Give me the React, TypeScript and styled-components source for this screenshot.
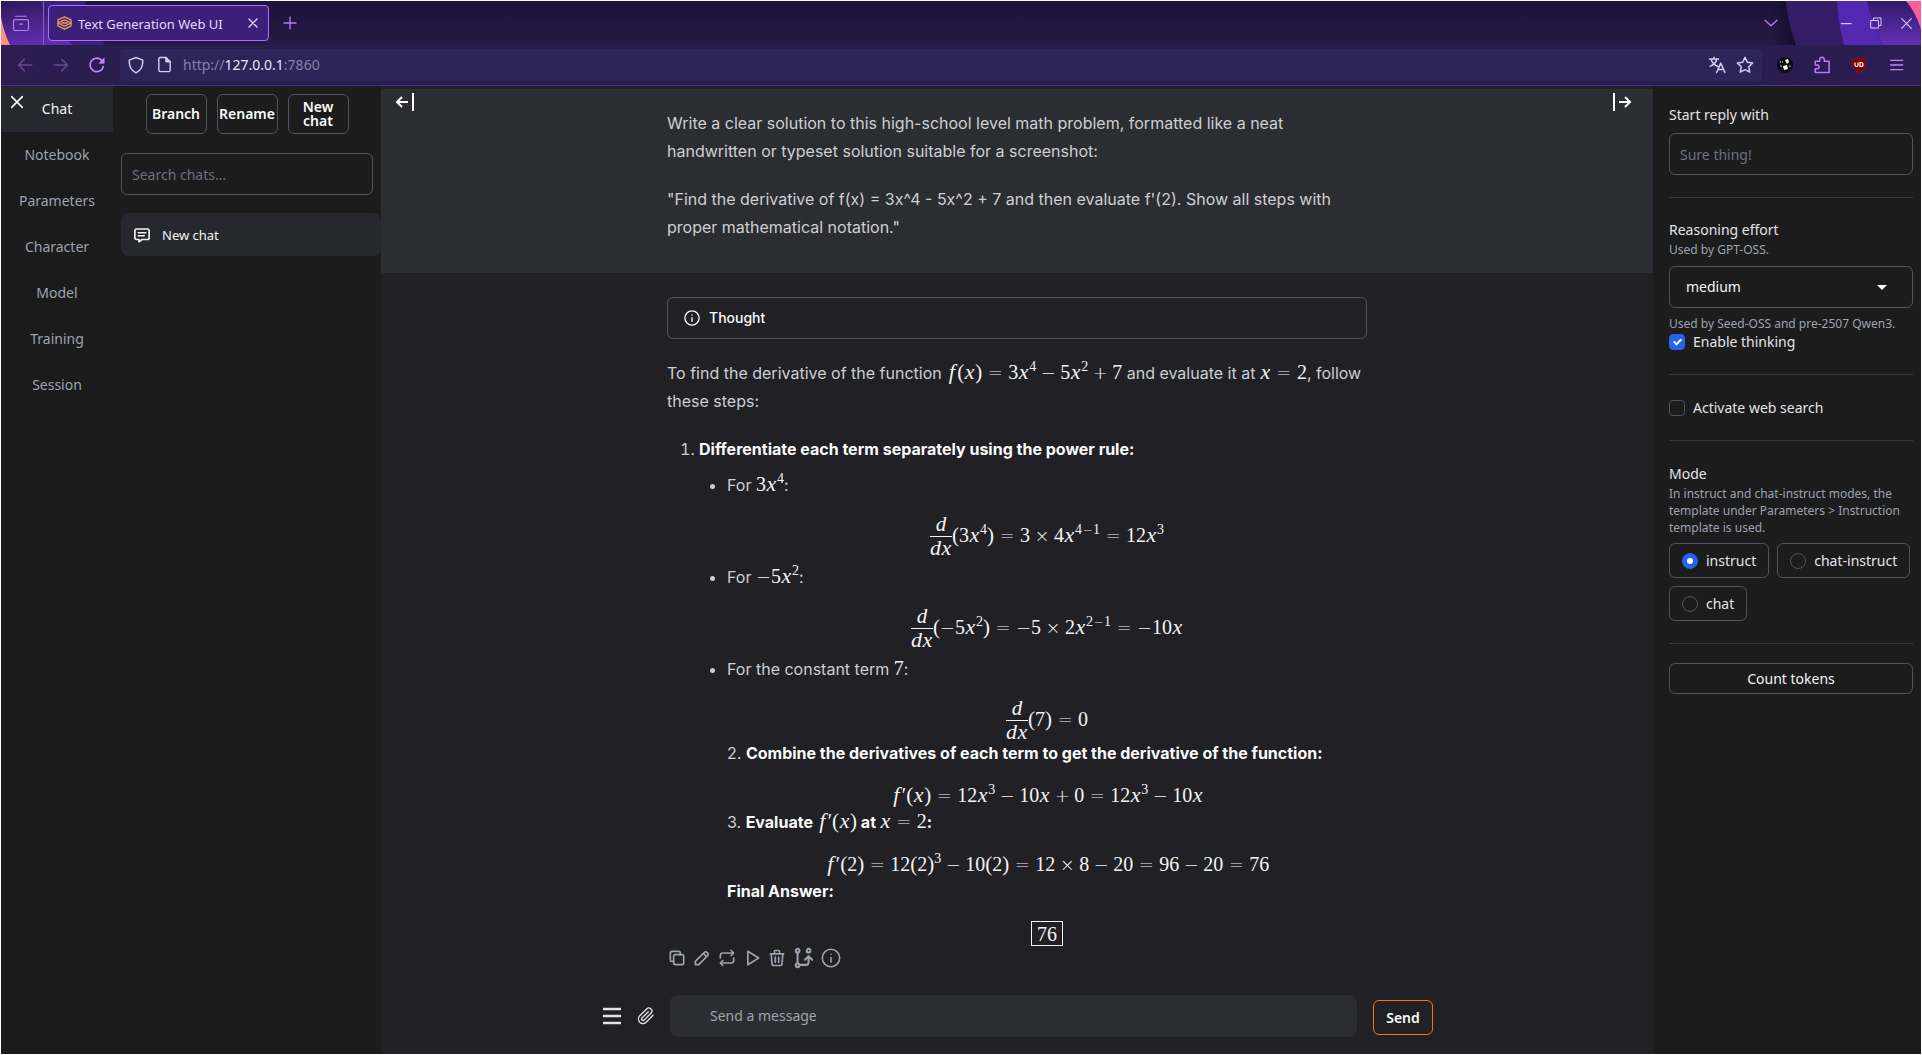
import React, { ReactNode, useState } from "react";
import styled, { createGlobalStyle, css } from "styled-components";

const ui = `"Noto Sans", sans-serif`;
const prose = `Inter, sans-serif`;
const line = "#52525b";

const GlobalStyle = createGlobalStyle`
  *, *::before, *::after { box-sizing: border-box; }
  body { margin: 0; background: #1c1c1c; font: 14px/20px ${ui}; color: #e4e4e7; }
  button, input, select, textarea { font: inherit; color: inherit; }
  button { background: none; border: 0; padding: 0; }
  p, ol, ul { margin: 0; padding: 0; }
`;

const Window = styled.div`
  display: flex;
  flex-direction: column;
  height: 100vh;
  border: 1px solid #fff;
  overflow: hidden;
`;

/* ---------- browser chrome ---------- */

const TabStrip = styled.header`
  position: relative;
  display: flex;
  align-items: center;
  height: 44px;
  flex: none;
  background: linear-gradient(#1f1238, #271945);
  color: #d8c7ff;
`;

const Backdrop = styled.svg<{ $side: "left" | "right" }>`
  position: absolute;
  top: 0;
  ${(p) => p.$side}: 0;
`;

const StripRow = styled.div`
  position: relative;
  display: flex;
  align-items: center;
  width: 100%;
  height: 100%;
`;

const ArchiveSlot = styled.button`
  display: grid;
  place-items: center;
  width: 43px;
  height: 44px;
  padding-right: 3px;
  border-right: 1px solid #7d62b8;
  color: #b57bf5;
`;

const Tab = styled.div`
  display: flex;
  align-items: center;
  gap: 6px;
  width: 221px;
  height: 36px;
  margin: 0 13px 0 4px;
  padding: 0 9px 0 8px;
  background: #3b1f78;
  border: 1px solid #a970ff;
  border-radius: 4px;
  color: #e3d9fb;
  font-size: 13px;
  span { flex: 1; white-space: nowrap; padding-top: 2px; }
`;

const IconButton = styled.button<{ $color?: string; $w?: number }>`
  display: grid;
  place-items: center;
  flex: none;
  width: ${(p) => p.$w ?? 16}px;
  height: 24px;
  color: ${(p) => p.$color ?? "inherit"};
`;

const WindowButtons = styled.div`
  display: flex;
  align-items: center;
  margin-left: auto;
  gap: 14px;
  padding-right: 7px;
  button:first-child { margin-right: 45px; }
`;

const NavBar = styled.nav`
  display: flex;
  align-items: center;
  flex: none;
  height: 41px;
  padding: 0 16px 1px 15px;
  background: linear-gradient(90deg, #2e1d4e, #291c4e 110px, #291c4e 1750px, #2c1d52);
  border-bottom: 1px solid #46348a;
  color: #b57bf5;
`;

const NavButtons = styled.div`
  display: flex;
  gap: 18px;
  margin-right: 14px;
`;

const UrlBar = styled.div`
  display: flex;
  align-items: center;
  flex: 1;
  height: 32px;
  padding: 0 8px 0 7px;
  gap: 10px;
  border-radius: 4px;
  background: #2d245a;
  color: #d5cdee;
`;

const Address = styled.span`
  flex: 1;
  color: #8880a8;
  b { font-weight: 400; color: #e9e4f8; }
`;

const Extensions = styled.div`
  display: flex;
  gap: 19px;
  margin-left: 14px;
`;

/* ---------- app columns ---------- */

const Columns = styled.div`
  display: flex;
  flex: 1;
  min-height: 0;
`;

const SideNav = styled.nav`
  position: relative;
  display: flex;
  flex-direction: column;
  flex: none;
  width: 112px;
  background: #1b1b1b;
`;

const NavItem = styled.button<{ $active?: boolean }>`
  height: 46px;
  color: ${(p) => (p.$active ? "#f4f4f5" : "#9ca3af")};
  background: ${(p) => (p.$active ? "#27272f" : "transparent")};
`;

const CloseNav = styled.button`
  position: absolute;
  top: 8px;
  left: 8px;
  width: 16px;
  height: 16px;
  color: #fff;
  svg { display: block; }
`;

const Chats = styled.aside`
  display: flex;
  flex-direction: column;
  flex: none;
  width: 268px;
  padding: 8px 0 0 8px;
  background: #1c1c1c;
`;

const ChatButtons = styled.div`
  display: flex;
  justify-content: center;
  gap: 10px;
  margin: 0 8px 19px 0;
`;

const outlined = css`
  border: 1px solid ${line};
  border-radius: 6px;
  background: transparent;
`;

const ChatButton = styled.button`
  ${outlined}
  width: 61px;
  height: 40px;
  line-height: 14px;
  font-weight: 600;
  color: #fafafa;
`;

const Field = styled.input`
  ${outlined}
  display: block;
  width: 100%;
  height: 42px;
  padding: 0 10px;
  &::placeholder { color: #6b7280; opacity: 1; }
`;

const SearchWrap = styled.div`
  margin: 0 8px 18px 0;
`;

const ChatItem = styled.button`
  display: flex;
  align-items: center;
  gap: 11px;
  height: 43px;
  padding: 0 12px;
  border-radius: 8px;
  background: #27272f;
  font-size: 13px;
  color: #f4f4f5;
`;

const Main = styled.main`
  position: relative;
  display: flex;
  flex-direction: column;
  flex: 1;
  min-width: 0;
  padding-top: 3px;
  background: #212125;
`;

const Toggle = styled.button<{ $side: "left" | "right" }>`
  position: absolute;
  top: 7px;
  ${(p) => (p.$side === "left" ? "left: 14px" : "right: 21px")};
  width: 20px;
  height: 18px;
  color: #fff;
  svg { display: block; }
`;

const Thread = styled.div`
  flex: 1;
  min-height: 0;
  overflow: hidden;
  font: 16px/28px ${prose};
  color: #d1d5db;
`;

const Message = styled.section<{ $user?: boolean }>`
  padding: ${(p) => (p.$user ? "20px 16px 32px" : "24px 16px 0")};
  background: ${(p) => (p.$user ? "#2c2d32" : "transparent")};
  color: ${(p) => (p.$user ? "#cdcfd4" : "#cbced4")};
  strong { color: #fafafa; font-weight: 700; }
`;

const Body = styled.div`
  max-width: 700px;
  margin: 0 auto;
  > p + p { margin-top: 20px; }
`;

const Thought = styled.button`
  ${outlined}
  display: flex;
  align-items: center;
  gap: 8px;
  width: 100%;
  height: 42px;
  margin-bottom: 20px;
  padding: 0 15px;
  font-size: 14px;
  font-weight: 500;
  color: #fafafa;
`;

const Steps = styled.ol`
  margin-top: 20px;
  padding-left: 32px;
`;

const Terms = styled.ul`
  margin-top: 8px;
  padding-left: 28px;
  list-style: disc;
  li + li { margin-top: 8px; }
`;

const Display = styled.div<{ $tall?: boolean }>`
  display: flex;
  align-items: center;
  justify-content: center;
  height: ${(p) => (p.$tall ? 56 : 41)}px;
  padding-top: 16px;
`;

const Actions = styled.div`
  display: flex;
  align-items: center;
  gap: 1px;
  margin-left: -2px;
  color: #9ca3af;
`;

const Composer = styled.form`
  display: flex;
  align-items: center;
  width: 100%;
  max-width: 832px;
  margin: 0 auto;
  padding: 0 0 17px 2px;
`;

const MessageBox = styled.textarea`
  flex: 1;
  min-width: 0;
  height: 42px;
  margin: 0 16px 0 15px;
  padding: 11px 40px;
  border: 0;
  border-radius: 8px;
  resize: none;
  background: #2c2d32;
  &::placeholder { color: #9ca3af; opacity: 1; }
`;

const ComposerIcon = styled.button`
  width: 18px;
  height: 18px;
  & + & { margin-left: 16px; }
  svg { display: block; }
`;

const Send = styled.button`
  width: 60px;
  height: 35px;
  margin-top: 3px;
  border: 1px solid #f97316;
  border-radius: 6px;
  font-weight: 600;
  color: #fafafa;
`;

/* ---------- settings ---------- */

const Settings = styled.aside`
  flex: none;
  width: 268px;
  padding: 19px 8px 0 16px;
  background: #1c1c1c;
`;

const Label = styled.label`
  display: block;
  height: 28px;
`;

const Legend = styled.div`
  display: block;
  height: 21px;
`;

const Hint = styled.p`
  font-size: 12px;
  line-height: 17px;
  color: #9ca3af;
`;

const Rule = styled.hr<{ $below: number }>`
  height: 1px;
  border: 0;
  margin: 22px 0 ${(p) => p.$below}px;
  background: #37373c;
`;

const SelectWrap = styled.div`
  position: relative;
  margin: 8px 0 7px;
  svg { position: absolute; right: 26px; top: 19px; pointer-events: none; }
`;

const Select = styled.select`
  ${outlined}
  display: block;
  appearance: none;
  width: 100%;
  height: 42px;
  padding: 0 16px;
  color: #f4f4f5;
`;

const Check = styled.label`
  display: flex;
  align-items: center;
  gap: 8px;
  height: 20px;
`;

const Box = styled.input`
  appearance: none;
  display: grid;
  place-items: center;
  flex: none;
  width: 16px;
  height: 16px;
  margin: 0;
  border: 1px solid ${line};
  border-radius: ${(p) => (p.type === "radio" ? "50%" : "4px")};
  &:checked { background: #2563eb; border-color: #2563eb; }
  ${(p) =>
    p.type === "radio"
      ? css`
          &:checked::after { content: ""; width: 6px; height: 6px; border-radius: 50%; background: #fff; }
        `
      : css`
          &:checked::after {
            content: "";
            width: 5px;
            height: 8px;
            margin-bottom: 2px;
            border: solid #fff;
            border-width: 0 2px 2px 0;
            transform: rotate(45deg);
          }
        `}
`;

const Radios = styled.div`
  display: flex;
  flex-wrap: wrap;
  gap: 8px;
  margin-top: 7px;
`;

const Option = styled.label`
  ${outlined}
  display: flex;
  align-items: center;
  gap: 8px;
  height: 35px;
  padding: 0 12px;
`;

const Count = styled.button`
  ${outlined}
  width: 100%;
  height: 31px;
  color: #f4f4f5;
`;

/* ---------- math ---------- */

const MathRun = styled.span`
  display: inline-block;
  white-space: nowrap;
  font: 20px/20px "Liberation Serif", serif;
  color: #f4f4f5;
`;

const Variable = styled.i`
  display: inline-block;
  width: 11px;
  text-align: center;
  font-size: 22px;
  line-height: 20px;
`;

const Paren = styled.span`
  display: inline-block;
  width: 7px;
  text-align: center;
  font-size: 21px;
`;

const Operator = styled.span<{ $w: number }>`
  display: inline-block;
  width: ${(p) => p.$w}px;
  text-align: center;
  font: 200 18px/20px "DejaVu Sans", sans-serif;
`;

const Raised = styled.sup`
  display: inline-block;
  font-size: 14px;
  line-height: 0;
  vertical-align: 8px;
  ${Operator} { font-size: 12px; line-height: 0; }
`;

const Fraction = styled.span`
  display: inline-flex;
  flex-direction: column;
  align-items: center;
`;

const Numerator = styled.span`
  width: 22px;
  line-height: 24px;
  text-align: center;
  font-size: 21px;
  border-bottom: 1px solid #f4f4f5;
`;

const Denominator = styled.span`
  line-height: 22px;
  font-size: 21px;
`;

const FracRow = styled(MathRun)`
  display: inline-flex;
  align-items: center;
`;

const Boxed = styled(MathRun)`
  border: 1px solid #f4f4f5;
  height: 25px;
  padding: 2px 5px;
`;

function glyphs(src: string, tight = false): ReactNode[] {
  const out: ReactNode[] = [];
  for (let i = 0; i < src.length; i++) {
    const c = src[i];
    const prev = src[i - 1];
    if (c === "^") {
      const long = src[i + 1] === "[";
      const end = long ? src.indexOf("]", i) : i + 2;
      out.push(<Raised key={i}>{glyphs(src.slice(long ? i + 2 : i + 1, end), true)}</Raised>);
      i = long ? end : i + 1;
    } else if (/[a-z]/.test(c)) out.push(<Variable key={i}>{c}</Variable>);
    else if (c === "(" || c === ")") out.push(<Paren key={i}>{c}</Paren>);
    else if (c === "=") out.push(<Operator key={i} $w={26}>=</Operator>);
    else if (/[−+×]/.test(c)) {
      const unary = !prev || prev === "(" || prev === "=";
      out.push(<Operator key={i} $w={tight ? 11 : unary ? 15 : 24}>{c}</Operator>);
    } else out.push(c);
  }
  return out;
}

const M = ({ children }: { children: string }) => <MathRun>{glyphs(children)}</MathRun>;

const Derivative = ({ of }: { of: string }) => (
  <FracRow>
    <Fraction>
      <Numerator><i>d</i></Numerator>
      <Denominator>{glyphs("dx")}</Denominator>
    </Fraction>
    <span>{glyphs(of)}</span>
  </FracRow>
);

/* ---------- icons ---------- */

const Ico = ({ size = 20, w = 2, box = 24, children }: { size?: number; w?: number; box?: number; children: ReactNode }) => (
  <svg width={size} height={size} viewBox={`0 0 ${box} ${box}`} fill="none" stroke="currentColor" strokeWidth={w} strokeLinecap="round" strokeLinejoin="round" aria-hidden="true">
    {children}
  </svg>
);

const Favicon = () => (
  <svg width="15" height="14" viewBox="0 0 15 14" fill="none" stroke="#f0a050" strokeWidth="1.3" strokeLinejoin="round" aria-hidden="true">
    <path d="M7.500 .8 14 3.800v6L7.500 13.200 1 9.800v-6z" />
    <path d="M1 7l6.500-3.200L14 7l-6.500 3.200zM4.500 7h6" />
  </svg>
);

const modes = ["instruct", "chat-instruct", "chat"];
const sections = ["Chat", "Notebook", "Parameters", "Character", "Model", "Training", "Session"];

function BrowserChrome() {
  return (
    <>
      <TabStrip>
        <Backdrop $side="left" width="110" height="44" viewBox="0 0 110 44" aria-hidden="true">
          <defs>
            <linearGradient id="glowL" x1="0" y1="0" x2="0.3" y2="1">
              <stop offset="0" stopColor="#2c1858" />
              <stop offset="1" stopColor="#5f2db0" />
            </linearGradient>
          </defs>
          <path d="M0 0H38Q52 26 72 44H0z" fill="url(#glowL)" />
          <path d="M38 0H84Q92 26 104 44H72Q52 26 38 0z" fill="#3c2080" />
          <path d="M0 16Q3 32 9 44H0z" fill="#ff8f78" />
        </Backdrop>
        <Backdrop $side="right" width="150" height="44" viewBox="0 0 150 44" aria-hidden="true">
          <defs>
            <linearGradient id="glowR" x1="0" y1="0" x2="0" y2="1">
              <stop offset="0" stopColor="#331a6a" />
              <stop offset="1" stopColor="#6230b4" />
            </linearGradient>
            <linearGradient id="shade" x1="0" y1="0" x2="1" y2="0">
              <stop offset="0" stopColor="#150c2c" stopOpacity="0" />
              <stop offset="1" stopColor="#150c2c" />
            </linearGradient>
          </defs>
          <path d="M0 0h15q2 22 10 44H0z" fill="url(#shade)" />
          <path d="M15 0h51q1 22 7 44H25Q17 22 15 0z" fill="#341d66" />
          <path d="M66 0h31q4 24 15 44H73Q67 22 66 0z" fill="#5329b4" />
          <path d="M96 0h54v44h-38Q101 24 96 0z" fill="url(#glowR)" />
          <path d="M135 0h15v28Q144 10 135 0z" fill="#ff5f95" />
        </Backdrop>
        <StripRow>
          <ArchiveSlot aria-label="Tab overview">
            <Ico size={18} w={1.6}><path d="M5 3h14M2 9.500Q2 7.500 4 7.500h16q2 0 2 2V20q0 2-2 2H4q-2 0-2-2zM10 13.500h4" /></Ico>
          </ArchiveSlot>
          <Tab>
            <Favicon />
            <span>Text Generation Web UI</span>
            <IconButton $w={12} aria-label="Close tab"><Ico size={12} w={2.600}><path d="M4 4l16 16M20 4 4 20" /></Ico></IconButton>
          </Tab>
          <IconButton $color="#b57bf5" aria-label="New tab"><Ico size={16} w={2}><path d="M12 3v18M3 12h18" /></Ico></IconButton>
          <WindowButtons>
            <IconButton $color="#b57bf5" aria-label="List tabs"><Ico size={16} w={2}><path d="M3 8l9 8 9-8" /></Ico></IconButton>
            <IconButton aria-label="Minimize"><Ico size={14} w={2}><path d="M4 13h17" /></Ico></IconButton>
            <IconButton aria-label="Restore"><Ico size={12} w={2}><path d="M2 7h15v15H2zM7 7V2h15v15h-5" /></Ico></IconButton>
            <IconButton aria-label="Close"><Ico size={13} w={2}><path d="M3 3l18 18M21 3 3 21" /></Ico></IconButton>
          </WindowButtons>
        </StripRow>
      </TabStrip>
      <NavBar>
        <NavButtons>
          <IconButton $color="#6a4594" $w={18} aria-label="Back"><Ico size={18} w={2}><path d="M21 12H4M11 4.500 3.500 12l7.500 7.500" /></Ico></IconButton>
          <IconButton $color="#6a4594" $w={18} aria-label="Forward"><Ico size={18} w={2}><path d="M3 12h17M13 4.500l7.500 7.500-7.500 7.500" /></Ico></IconButton>
          <IconButton $color="#c185fa" $w={18} aria-label="Reload"><Ico size={18} w={2.200}><path d="M20.500 14A9 9 0 1 1 19 6.500" /><path d="M15 9.500h6.500V3z" fill="currentColor" strokeWidth={1} /></Ico></IconButton>
        </NavButtons>
        <UrlBar>
          <IconButton $w={18} aria-label="Site protection"><Ico size={18} w={2}><path d="M12 2 3 5.500C2.500 13 5 19 12 22.500 19 19 21.500 13 21 5.500z" /></Ico></IconButton>
          <IconButton $w={18} aria-label="Site information"><Ico size={17} w={2}><path d="M14 2H6Q4 2 4 4v16q0 2 2 2h12q2 0 2-2V8z" /><path d="M14 2v6h6z" fill="currentColor" /></Ico></IconButton>
          <Address>http://<b>127.0.0.1</b>:7860</Address>
          <IconButton $w={18} aria-label="Translate"><Ico size={18} w={2}><path d="M2 4h12M8 1.500V4M4 4q2 7 9 10M12 4Q10 11 3 13.500M11.500 22 17 9.500 22.500 22M13.500 18h7" /></Ico></IconButton>
          <IconButton $w={18} aria-label="Bookmark"><Ico size={18} w={2}><path d="M12 1.800l3.100 6.600 7.100 1-5.200 5 1.300 7.200L12 18.200l-6.300 3.400L7 14.400l-5.200-5 7.100-1z" /></Ico></IconButton>
        </UrlBar>
        <Extensions>
          <IconButton $w={18} aria-label="Dark theme">
            <svg width="16" height="16" viewBox="0 0 16 16" aria-hidden="true">
              <circle cx="8" cy="8" r="8" fill="#0c0c10" />
              <path d="M8 3l3-1 1 3-2 2zM6 9l4-1 1 4-4 1zM3 8l2 1-1 1zM5 4l1 1-1 1z" fill="#fff" />
              <path d="M2 5l2-1v2zM12 8l2 1-1 2z" fill="#aaa" />
            </svg>
          </IconButton>
          <IconButton $w={18} aria-label="Extensions"><Ico size={18} w={2}><path d="M9 7V4.500a3 3 0 0 1 6 0V7h6.500v15H3v-5h2.500a2.500 2.500 0 0 0 0-5H3V7z" /></Ico></IconButton>
          <IconButton $w={18} aria-label="uBlock Origin">
            <svg width="16" height="16" viewBox="0 0 16 16" aria-hidden="true">
              <path d="M8 0q3 2 7 2v4q0 7-7 10Q1 13 1 6V2q4 0 7-2z" fill="#800000" stroke="#5c3030" strokeWidth=".6" />
              <path d="M4 5.500v2.500a1.500 1.500 0 0 0 3 0V5.500M9 5.500v4h1a2 2 0 0 0 0-4z" fill="none" stroke="#fff" strokeWidth="1.200" />
            </svg>
          </IconButton>
          <IconButton $color="#c185fa" $w={18} aria-label="Menu"><Ico size={16} w={2}><path d="M4 5h18M4 12h18M4 19h18" /></Ico></IconButton>
        </Extensions>
      </NavBar>
    </>
  );
}

function ActionBar() {
  return (
    <Actions>
      <IconButton $w={24} aria-label="Copy"><Ico><rect x="8" y="8" width="12" height="12" rx="2" /><path d="M16 8V6a2 2 0 0 0-2-2H6a2 2 0 0 0-2 2v8a2 2 0 0 0 2 2h2" /></Ico></IconButton>
      <IconButton $w={24} aria-label="Edit"><Ico><path d="M4 20h4L18.500 9.500a2.828 2.828 0 1 0-4-4L4 16zM13.500 6.500l4 4" /></Ico></IconButton>
      <IconButton $w={24} aria-label="Regenerate"><Ico><path d="M4 12V9a3 3 0 0 1 3-3h13m-3-3 3 3-3 3M20 12v3a3 3 0 0 1-3 3H4m3 3-3-3 3-3" /></Ico></IconButton>
      <IconButton $w={24} aria-label="Continue"><Ico><path d="M7 4v16l13-8z" /></Ico></IconButton>
      <IconButton $w={24} aria-label="Delete"><Ico><path d="M4 7h16M10 11v6M14 11v6M5 7l1 12a2 2 0 0 0 2 2h8a2 2 0 0 0 2-2l1-12M9 7V4a1 1 0 0 1 1-1h4a1 1 0 0 1 1 1v3" /></Ico></IconButton>
      <IconButton $w={28} aria-label="Branch"><Ico size={22} w={2.200}><circle cx="5" cy="4" r="2" /><circle cx="17" cy="4" r="2" /><circle cx="5" cy="20" r="2" /><path d="M5 6v12M7 19.500h7q3 0 3-3V11M13 14l4-4 4 4" /></Ico></IconButton>
      <IconButton $w={24} aria-label="Info"><Ico size={22} w={1.700}><circle cx="12" cy="12" r="9.500" /><path d="M12 8h.01M12 11.500V16.500" /></Ico></IconButton>
    </Actions>
  );
}

export default function App() {
  const [mode, setMode] = useState("instruct");
  const [thinking, setThinking] = useState(true);
  const [search, setSearch] = useState(false);

  return (
    <Window>
      <GlobalStyle />
      <BrowserChrome />
      <Columns>
        <SideNav>
          {sections.map((s, i) => (
            <NavItem key={s} $active={i === 0}>{s}</NavItem>
          ))}
          <CloseNav aria-label="Close menu"><Ico size={16} w={2.400}><path d="M4 4l16 16M20 4 4 20" /></Ico></CloseNav>
        </SideNav>
        <Chats>
          <ChatButtons>
            <ChatButton>Branch</ChatButton>
            <ChatButton>Rename</ChatButton>
            <ChatButton>New chat</ChatButton>
          </ChatButtons>
          <SearchWrap><Field aria-label="Search chats" placeholder="Search chats..." /></SearchWrap>
          <ChatItem>
            <Ico size={18} w={2.200}><path d="M5 4h14q2.500 0 2.500 2.500v9Q21.500 18 19 18h-7l-4 3v-3H5q-2.500 0-2.500-2.500v-9Q2.500 4 5 4zM7 9h10M7 13h8" /></Ico>
            New chat
          </ChatItem>
        </Chats>
        <Main>
          <Thread>
            <Message $user>
              <Body>
                <p>Write a clear solution to this high-school level math problem, formatted like a neat handwritten or typeset solution suitable for a screenshot:</p>
                <p>"Find the derivative of f(x) = 3x^4 - 5x^2 + 7 and then evaluate f'(2). Show all steps with proper mathematical notation."</p>
              </Body>
            </Message>
            <Message>
              <Body>
                <Thought>
                  <Ico size={18} w={1.800}><circle cx="12" cy="12" r="9.500" /><path d="M12 8h.01M12 11.500V16.500" /></Ico>
                  Thought
                </Thought>
                <p>To find the derivative of the function <M>f(x)=3x^4−5x^2+7</M> and evaluate it at <M>x=2</M>, follow these steps:</p>
                <Steps>
                  <li>
                    <strong>Differentiate each term separately using the power rule:</strong>
                    <Terms>
                      <li>
                        For <M>3x^4</M>:
                        <Display $tall><Derivative of="(3x^4)=3×4x^[4−1]=12x^3" /></Display>
                      </li>
                      <li>
                        For <M>−5x^2</M>:
                        <Display $tall><Derivative of="(−5x^2)=−5×2x^[2−1]=−10x" /></Display>
                      </li>
                      <li>
                        For the constant term <M>7</M>:
                        <Display $tall><Derivative of="(7)=0" /></Display>
                        <p>2. <strong>Combine the derivatives of each term to get the derivative of the function:</strong></p>
                        <Display><M>f′(x)=12x^3−10x+0=12x^3−10x</M></Display>
                        <p>3. <strong>Evaluate <M>f′(x)</M> at <M>x=2</M>:</strong></p>
                        <Display><M>f′(2)=12(2)^3−10(2)=12×8−20=96−20=76</M></Display>
                        <p><strong>Final Answer:</strong></p>
                        <Display><Boxed>76</Boxed></Display>
                      </li>
                    </Terms>
                  </li>
                </Steps>
                <ActionBar />
              </Body>
            </Message>
          </Thread>
          <Composer onSubmit={(e) => e.preventDefault()}>
            <ComposerIcon type="button" aria-label="Options"><Ico size={18} w={2.600} box={18}><path strokeLinecap="butt" d="M0 2h18M0 9h18M0 16h18" /></Ico></ComposerIcon>
            <ComposerIcon type="button" aria-label="Attach file"><Ico size={18} w={1.800}><path d="M21.400 11.100l-9.200 9.200a6 6 0 0 1-8.500-8.500l9.200-9.200a4 4 0 0 1 5.700 5.700l-9.200 9.200a2 2 0 0 1-2.800-2.800l8.500-8.500" /></Ico></ComposerIcon>
            <MessageBox aria-label="Message" placeholder="Send a message" rows={1} />
            <Send>Send</Send>
          </Composer>
          <Toggle $side="left" aria-label="Collapse chats"><svg width="20" height="18" viewBox="0 0 20 18" fill="none" stroke="currentColor" strokeWidth="2" aria-hidden="true"><path d="M13 9H3M7 4 2 9l5 5M18 0v18" /></svg></Toggle>
          <Toggle $side="right" aria-label="Collapse settings"><svg width="20" height="18" viewBox="0 0 20 18" fill="none" stroke="currentColor" strokeWidth="2" aria-hidden="true"><path d="M7 9h10M13 4l5 5-5 5M2 0v18" /></svg></Toggle>
        </Main>
        <Settings>
          <Label htmlFor="start">Start reply with</Label>
          <Field id="start" placeholder="Sure thing!" />
          <Rule $below={22} />
          <Legend as="label" htmlFor="effort">Reasoning effort</Legend>
          <Hint>Used by GPT-OSS.</Hint>
          <SelectWrap>
            <Select id="effort" defaultValue="medium">
              <option>low</option>
              <option>medium</option>
              <option>high</option>
            </Select>
            <svg width="10" height="5" viewBox="0 0 10 5" aria-hidden="true"><path d="M0 0h10L5 5z" fill="#fff" /></svg>
          </SelectWrap>
          <Hint>Used by Seed-OSS and pre-2507 Qwen3.</Hint>
          <Check>
            <Box type="checkbox" checked={thinking} onChange={() => setThinking(!thinking)} />
            Enable thinking
          </Check>
          <Rule $below={23} />
          <Check>
            <Box type="checkbox" checked={search} onChange={() => setSearch(!search)} />
            Activate web search
          </Check>
          <Rule $below={23} />
          <Legend>Mode</Legend>
          <Hint>In instruct and chat-instruct modes, the template under Parameters &gt; Instruction template is used.</Hint>
          <Radios role="radiogroup" aria-label="Mode">
            {modes.map((m) => (
              <Option key={m}>
                <Box type="radio" name="mode" checked={mode === m} onChange={() => setMode(m)} />
                {m}
              </Option>
            ))}
          </Radios>
          <Rule $below={19} />
          <Count>Count tokens</Count>
        </Settings>
      </Columns>
    </Window>
  );
}
